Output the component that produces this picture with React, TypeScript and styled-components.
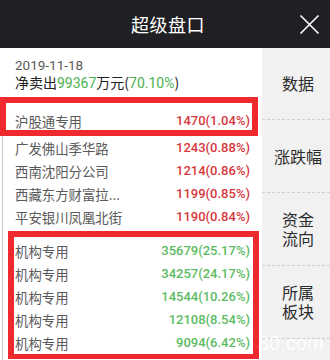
import React from "react";
import styled, { createGlobalStyle } from "styled-components";

const Global = createGlobalStyle`
  html, body { margin: 0; padding: 0; background: #ffffff; }
  body { width: 330px; height: 360px; overflow: hidden; font-family: "Roboto", "Noto Sans CJK SC", sans-serif; }
  * { box-sizing: border-box; }
`;

const Page = styled.div`
  position: relative;
  width: 330px;
  height: 360px;
  overflow: hidden;
  background: #ffffff;
`;

const Header = styled.div`
  position: relative;
  height: 48px;
  background: #1f1f24;
  display: flex;
  align-items: center;
  justify-content: center;
`;

const Title = styled.div`
  color: #ffffff;
  font-family: "Noto Sans CJK SC", sans-serif;
  font-size: 18px;
  letter-spacing: 0.5px;
  padding-left: 6px;
`;

const Close = styled.button`
  position: absolute;
  right: 10px;
  top: 14px;
  width: 21px;
  height: 21px;
  padding: 0;
  border: none;
  background: transparent;
  display: flex;
`;

const Body = styled.div`
  display: flex;
  height: 312px;
`;

const Left = styled.div`
  width: 262px;
  display: flex;
  flex-direction: column;
`;

const Info = styled.div`
  padding: 9px 0 0 15px;
  height: 49px;
  display: flex;
  flex-direction: column;
`;

const DateLine = styled.div`
  font-size: 13.5px;
  line-height: 16px;
  color: #5a5a5a;
`;

const NetLine = styled.div`
  font-family: "Noto Sans CJK SC", sans-serif;
  font-size: 14px;
  line-height: 18px;
  color: #222222;
`;

const Green = styled.span`
  color: #4cb24f;
  font-family: "Roboto", "Noto Sans CJK SC", sans-serif;
`;

const Box = styled.div<{ $left: number; $pt: number; $pr: number; $bb: number; $mt: number }>`
  margin-left: ${(p) => p.$left}px;
  margin-top: ${(p) => p.$mt}px;
  width: ${(p) => 258 - p.$left - (p.$left > 2 ? 2 : 0)}px;
  border: 6px solid #ee2a2e;
  border-bottom-width: ${(p) => p.$bb}px;
  padding: ${(p) => p.$pt}px ${(p) => p.$pr}px 0 ${(p) => 15 - p.$left - 6 - (p.$left > 2 ? 3 : 0)}px;
  background: #ffffff;
`;

const ListArea = styled.div`
  margin-left: 2px;
  border-left: 1px solid #c9c9c9;
  flex: 1;
  display: flex;
  flex-direction: column;
`;

const Plain = styled.div`
  padding: 0 12px 0 12px;
`;

const Row = styled.div<{ $h: number }>`
  height: ${(p) => p.$h}px;
  display: flex;
  align-items: center;
  justify-content: space-between;
`;

const Name = styled.span`
  font-family: "Noto Sans CJK SC", sans-serif;
  font-size: 13.4px;
  color: #595959;
  white-space: nowrap;
`;

const Value = styled.span<{ $up: boolean }>`
  font-family: "Roboto", sans-serif;
  font-weight: 500;
  font-size: 13px;
  color: ${(p) => (p.$up ? "#d8383d" : "#5cbb63")};
`;

const Side = styled.div`
  flex: 1;
  background: #f1f1f1;
  display: flex;
  flex-direction: column;
`;

const Tab = styled.div`
  height: 73px;
  flex-shrink: 0;
  border-bottom: 1px dashed #cfcfcf;
  display: flex;
  align-items: center;
  justify-content: center;
  text-align: center;
  white-space: pre-line;
  font-family: "Noto Sans CJK SC", sans-serif;
  font-size: 16px;
  line-height: 19px;
  color: #2b2b2b;
  padding-left: 4px;
  &:first-child { height: 72px; }
`;

const Watermark = styled.div`
  position: absolute;
  left: 258px;
  top: 332px;
  font-family: "Liberation Sans", sans-serif;
  font-size: 20px;
  line-height: 22px;
  color: rgba(255, 255, 255, 0.92);
  pointer-events: none;
`;

const brokers = [
  ["广发佛山季华路", "1243(0.88%)"],
  ["西南沈阳分公司", "1214(0.86%)"],
  ["西藏东方财富拉...", "1199(0.85%)"],
  ["平安银川凤凰北街", "1190(0.84%)"],
];

const inst = ["35679(25.17%)", "34257(24.17%)", "14544(10.26%)", "12108(8.54%)", "9094(6.42%)"];

const tabs = ["数据", "涨跌幅", "资金\n流向", "所属\n板块"];

export default function App() {
  return (
    <Page>
      <Global />
      <Header>
        <Title>超级盘口</Title>
        <Close aria-label="close">
          <svg width="21" height="21" viewBox="0 0 21 21">
            <path d="M1.5 1.5 L19.5 19.5 M19.5 1.5 L1.5 19.5" stroke="#ffffff" strokeWidth="1.6" fill="none" />
          </svg>
        </Close>
      </Header>
      <Body>
        <Left>
          <Info>
            <DateLine>2019-11-18</DateLine>
            <NetLine>
              净卖出<Green>99367</Green>万元(<Green>70.10%</Green>)
            </NetLine>
          </Info>
          <Box $left={0} $pt={8} $pr={2} $bb={6} $mt={0}>
            <Row $h={19}>
              <Name>沪股通专用</Name>
              <Value $up>1470(1.04%)</Value>
            </Row>
          </Box>
          <ListArea>
            <Plain>
              {brokers.map(([n, v]) => (
                <Row $h={23} key={n}>
                  <Name>{n}</Name>
                  <Value $up>{v}</Value>
                </Row>
              ))}
            </Plain>
            <Box $left={5} $pt={2} $pr={3} $bb={5} $mt={3}>
              {inst.map((v) => (
                <Row $h={23} key={v}>
                  <Name>机构专用</Name>
                  <Value $up={false}>{v}</Value>
                </Row>
              ))}
            </Box>
          </ListArea>
        </Left>
        <Side>
          {tabs.map((t) => (
            <Tab key={t}>{t}</Tab>
          ))}
        </Side>
      </Body>
      <Watermark>30.com</Watermark>
    </Page>
  );
}
